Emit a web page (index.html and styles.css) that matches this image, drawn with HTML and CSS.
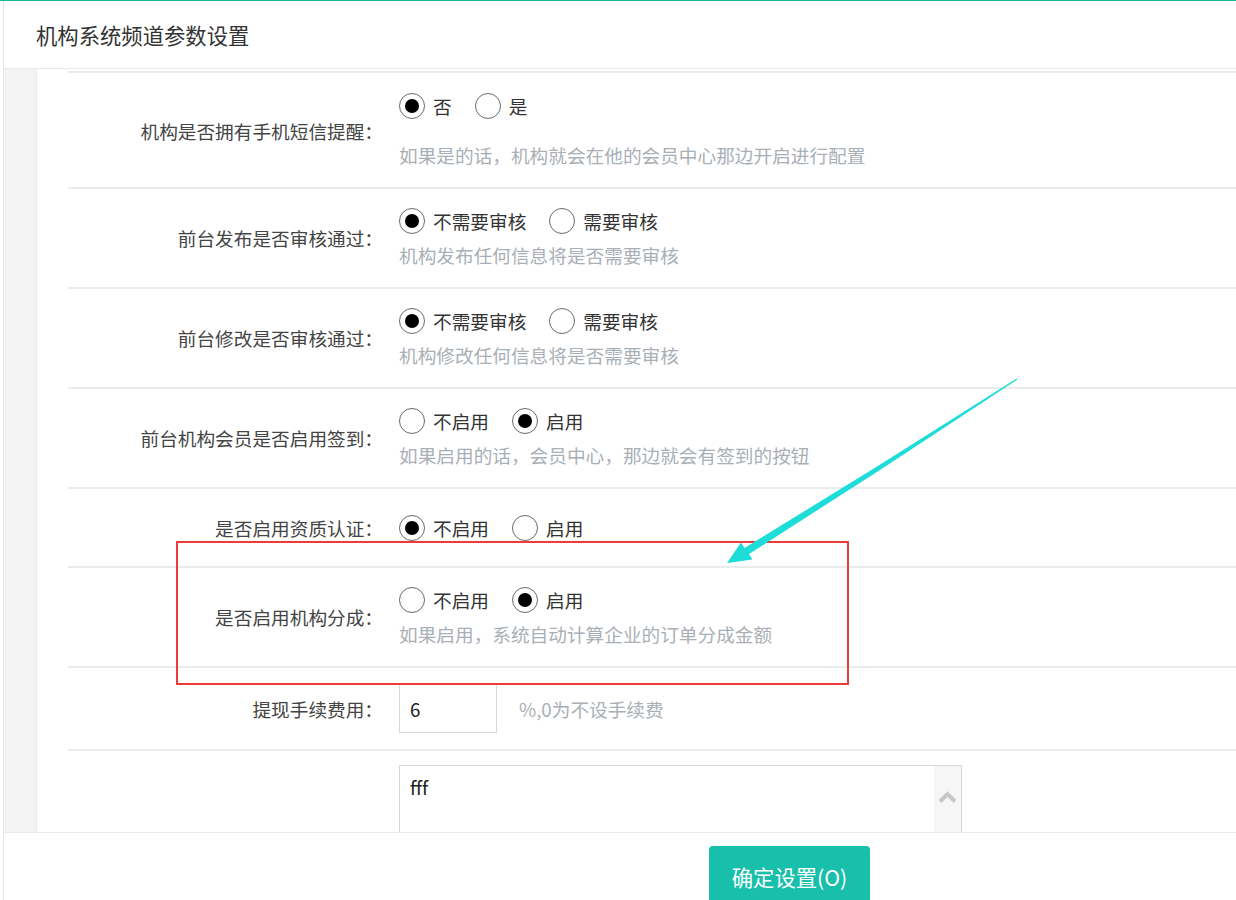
FILE: index.html
```html
<!DOCTYPE html>
<html lang="zh-CN">
<head>
  <meta charset="UTF-8">
  <meta name="viewport" content="width=device-width, initial-scale=1.0">
  <title>机构系统频道参数设置</title>
  <link rel="stylesheet" href="styles.css">
</head>
<body>
  <div class="page">
    <div class="frame">
      <div class="panel-head">机构系统频道参数设置</div>

      <div class="panel-body">
        <div class="side"></div>
        <div class="scroll">
          <div class="row row-first">
            <div class="label">机构是否拥有手机短信提醒：</div>
            <div class="field">
              <div class="options">
                <span class="opt"><i class="radio checked"></i>否</span>
                <span class="opt"><i class="radio"></i>是</span>
              </div>
              <div class="help">如果是的话，机构就会在他的会员中心那边开启进行配置</div>
            </div>
          </div>

          <div class="row">
            <div class="label">前台发布是否审核通过：</div>
            <div class="field">
              <div class="options">
                <span class="opt"><i class="radio checked"></i>不需要审核</span>
                <span class="opt"><i class="radio"></i>需要审核</span>
              </div>
              <div class="help">机构发布任何信息将是否需要审核</div>
            </div>
          </div>

          <div class="row">
            <div class="label">前台修改是否审核通过：</div>
            <div class="field">
              <div class="options">
                <span class="opt"><i class="radio checked"></i>不需要审核</span>
                <span class="opt"><i class="radio"></i>需要审核</span>
              </div>
              <div class="help">机构修改任何信息将是否需要审核</div>
            </div>
          </div>

          <div class="row">
            <div class="label">前台机构会员是否启用签到：</div>
            <div class="field">
              <div class="options">
                <span class="opt"><i class="radio"></i>不启用</span>
                <span class="opt"><i class="radio checked"></i>启用</span>
              </div>
              <div class="help">如果启用的话，会员中心，那边就会有签到的按钮</div>
            </div>
          </div>

          <div class="row row-single">
            <div class="label">是否启用资质认证：</div>
            <div class="field">
              <div class="options">
                <span class="opt"><i class="radio checked"></i>不启用</span>
                <span class="opt"><i class="radio"></i>启用</span>
              </div>
            </div>
          </div>

          <div class="row row-split">
            <div class="label">是否启用机构分成：</div>
            <div class="field">
              <div class="options">
                <span class="opt"><i class="radio"></i>不启用</span>
                <span class="opt"><i class="radio checked"></i>启用</span>
              </div>
              <div class="help">如果启用，系统自动计算企业的订单分成金额</div>
            </div>
          </div>

          <div class="row row-input">
            <div class="label">提现手续费用：</div>
            <div class="field field-inline">
              <div class="input">6</div>
              <span class="help unit">%,0为不设手续费</span>
            </div>
          </div>

          <div class="row row-text">
            <div class="label"></div>
            <div class="field">
              <div class="textarea">
                <div class="textarea-text">fff</div>
                <div class="scrollbar">
                  <svg width="19" height="12" viewBox="0 0 19 12"><path d="M2 10.5 L9.5 3 L17 10.5" fill="none" stroke="#c6c6c6" stroke-width="4"/></svg>
                </div>
              </div>
            </div>
          </div>
        </div>
      </div>

      <div class="panel-foot">
        <button class="btn-submit">确定设置(O)</button>
      </div>
    </div>

    <!-- screenshot annotations -->
    <div class="mark-box"></div>
    <svg class="mark-arrow" width="1236" height="900" viewBox="0 0 1236 900">
      <polygon fill="#1edcd8" points="727,563 752.5,559.5 749,554 880,470 1017.4,379.4 1016.6,378.6 877,466.5 744.5,548 741,542.5"/>
    </svg>
  </div>
</body>
</html>
```

FILE: styles.css
```css
:root {
  --teal: #18bfab;
  --line: #e7eaec;
  --text: #333333;
  --label: #444444;
  --muted: #a9afb6;
}
* { box-sizing: border-box; margin: 0; padding: 0; }
body {
  font-family: "Noto Sans CJK SC", "Noto Sans", sans-serif;
  color: var(--text);
  background: #fff;
  overflow: hidden;
}
.page {
  position: relative;
  width: 1236px;
  height: 900px;
  border-top: 1px solid #1ab8a0;
}
.frame {
  margin-left: 3px;
  height: 899px;
  border-left: 1px solid #e5e6e7;
  display: flex;
  flex-direction: column;
}
.panel-head {
  height: 68px;
  line-height: 67px;
  padding-left: 32px;
  font-size: 21.33px;
  color: #333;
  border-bottom: 1px solid var(--line);
}
.panel-body {
  display: flex;
  height: 764px;
  border-bottom: 1px solid var(--line);
}
.side {
  width: 33px;
  background: #f3f3f4;
  border-right: 1px solid var(--line);
}
.scroll {
  flex: 1;
  overflow: hidden;
  padding: 2px 0 0 31px;
}
.row {
  display: flex;
  align-items: center;
  border-top: 2px solid #e9ecec;
  padding: 19px 0;
}
.row-first { padding: 20px 0 19px; }
.row-first .help { margin-top: 23px; }
.row-single { padding: 26px 0 25px; }
.row-split { padding: 19px 0 19px; }
.row-input { padding: 16px 0 16px; }
.row-text { padding: 14px 0 0; align-items: flex-start; }
.label {
  width: 315px;
  flex-shrink: 0;
  text-align: right;
  font-size: 18.67px;
  color: var(--label);
  line-height: 26px;
}
.field {
  margin-left: 16px;
  font-size: 18.67px;
}
.field-inline {
  display: flex;
  align-items: center;
}
.options {
  display: flex;
  height: 26px;
  line-height: 26px;
}
.opt {
  display: inline-flex;
  align-items: center;
  gap: 8px;
  margin-right: 23px;
  color: var(--text);
}
.radio {
  width: 26px;
  height: 26px;
  border: 1.5px solid #6b6b6b;
  border-radius: 50%;
  display: flex;
  align-items: center;
  justify-content: center;
}
.radio.checked::after {
  content: "";
  width: 14px;
  height: 14px;
  border-radius: 50%;
  background: #000;
}
.help {
  margin-top: 8px;
  line-height: 26px;
  color: var(--muted);
}
.unit { margin: 0 0 0 22px; }
.input {
  width: 98px;
  height: 49px;
  border: 1px solid #d5d9dc;
  padding-left: 10px;
  line-height: 47px;
  color: #222;
}
.textarea {
  width: 563px;
  height: 110px;
  border: 1px solid #d3d8db;
  display: flex;
}
.textarea-text {
  flex: 1;
  padding: 8px 10px;
  line-height: 26px;
  color: #222;
}
.scrollbar {
  width: 27px;
  background: #f6f6f6;
  display: flex;
  justify-content: center;
  padding-top: 25px;
}
.panel-foot {
  flex: 1;
  padding: 13px 0 0 705px;
}
.btn-submit {
  width: 161px;
  height: 62px;
  border: none;
  border-radius: 4px;
  background: var(--teal);
  color: #fff;
  font-family: inherit;
  font-size: 21.33px;
  line-height: 28px;
}
.mark-box {
  position: absolute;
  left: 176px;
  top: 540px;
  width: 673px;
  height: 144px;
  border: 2px solid #f03a3a;
}
.mark-arrow {
  position: absolute;
  left: 0;
  top: -1px;
  pointer-events: none;
}
```
